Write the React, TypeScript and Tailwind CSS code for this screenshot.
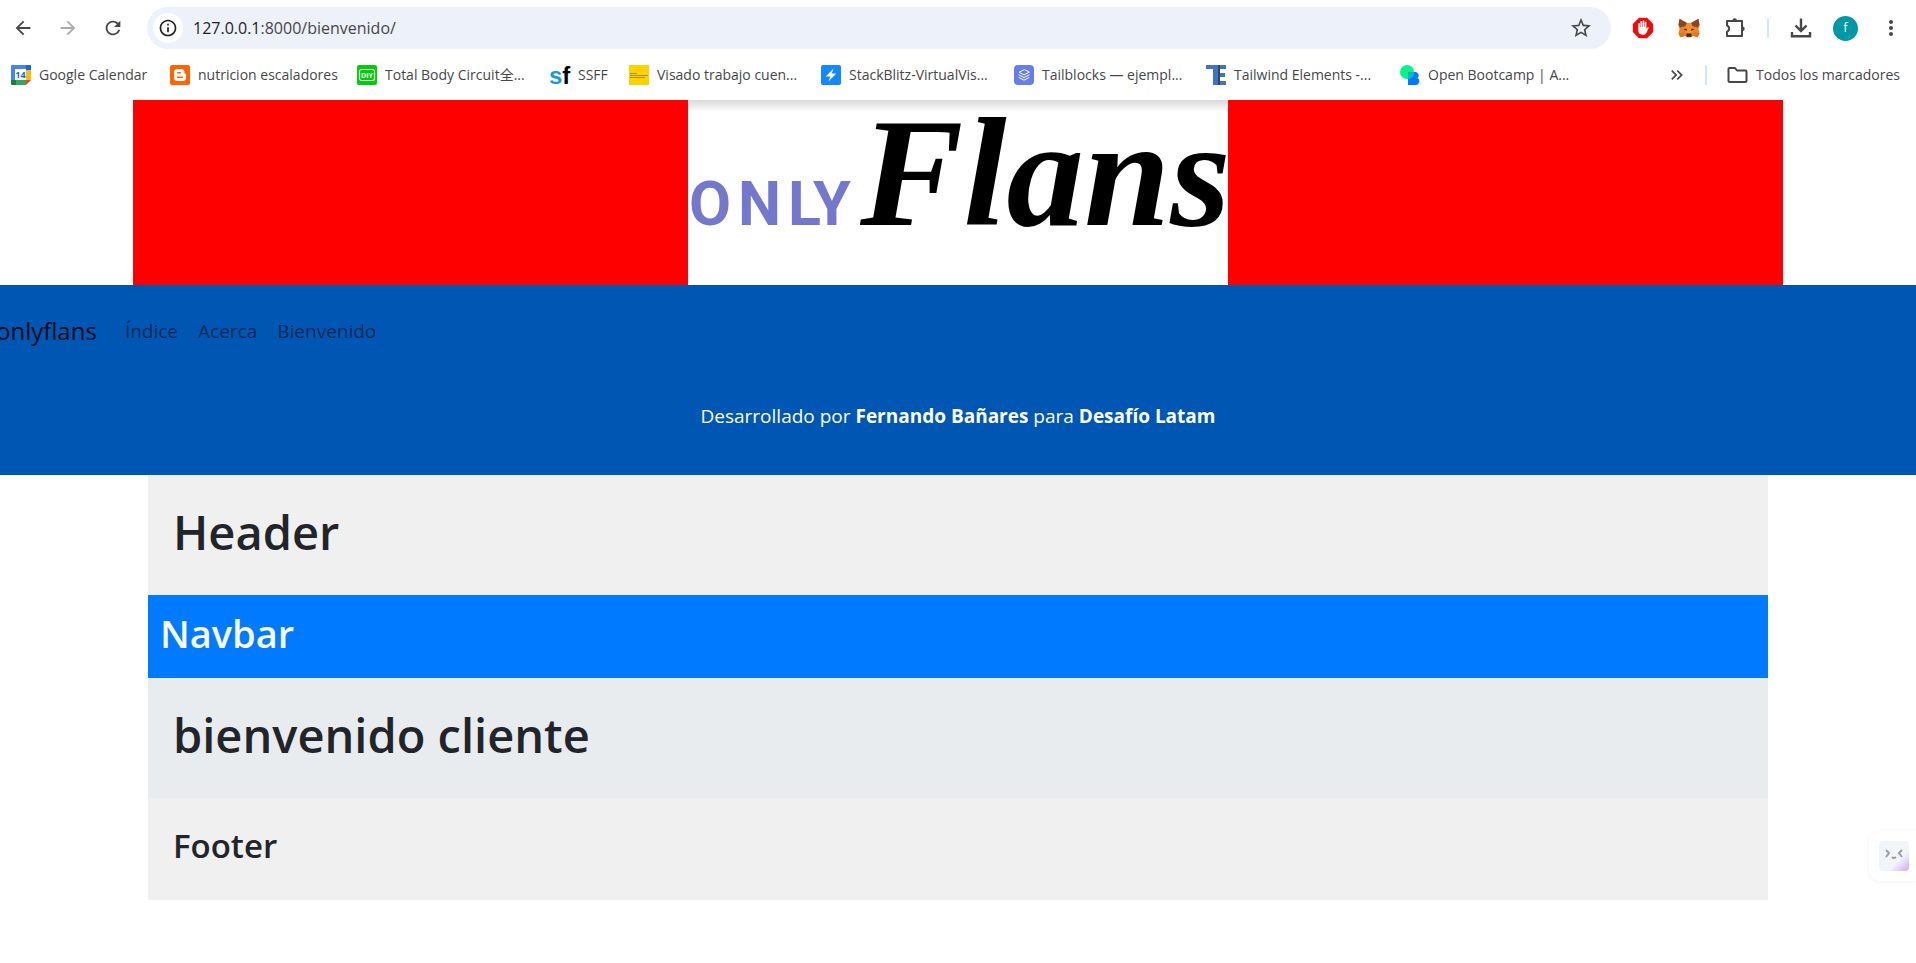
import type { ReactNode } from "react";
import {
  MdArrowBack,
  MdArrowForward,
  MdRefresh,
  MdInfoOutline,
  MdStarBorder,
  MdMoreVert,
  MdKeyboardDoubleArrowRight,
} from "react-icons/md";

function CalendarIcon() {
  return (
    <svg viewBox="0 0 20 20" className="size-5 shrink-0" aria-hidden="true">
      <path d="M1 0h14v4H4v12H0V1a1 1 0 0 1 1-1z" fill="#4285f4" />
      <path d="M15 0h4a1 1 0 0 1 1 1v4h-5z" fill="#1967d2" />
      <path d="M15 5h5v10h-5z" fill="#fbbc04" />
      <path d="M5 15h10v5H5z" fill="#34a853" />
      <path d="M0 15h5v5H1a1 1 0 0 1-1-1z" fill="#188038" />
      <path d="M15 15h5l-5 5z" fill="#ea4335" />
      <path d="M4 4h11v11H4z" fill="#fff" />
      <text x="9.5" y="13" textAnchor="middle" fontSize="9" fontWeight="700" fontFamily="Open Sans, sans-serif" fill="#1967d2">
        14
      </text>
    </svg>
  );
}

function BloggerIcon() {
  return (
    <svg viewBox="0 0 20 20" className="size-5 shrink-0" aria-hidden="true">
      <rect width="20" height="20" rx="2" fill="#ff6600" />
      <path
        d="M7.5 4h3.6a3.4 3.4 0 0 1 3.4 3.4c0 1 .3 1.3 1 1.4.4 0 .6.3.6.7v3.1A3.4 3.4 0 0 1 12.7 16H7.5A3.5 3.5 0 0 1 4 12.5v-5A3.5 3.5 0 0 1 7.5 4z"
        fill="#fff"
      />
      <path d="M7.6 7.7h2.8M7.6 12.2h4.8" stroke="#ff6600" strokeWidth="1.6" strokeLinecap="round" />
    </svg>
  );
}

function DiyIcon() {
  return (
    <svg viewBox="0 0 20 20" className="size-5 shrink-0" aria-hidden="true">
      <rect width="20" height="20" rx="2" fill="#05cb0c" />
      <rect x="2.5" y="4.5" width="15" height="11" rx="2" fill="none" stroke="#d9fbd9" strokeWidth="1.2" />
      <text x="10" y="12.7" textAnchor="middle" fontSize="7" fontWeight="700" fontFamily="Open Sans, sans-serif" fill="#fff">
        DIY
      </text>
    </svg>
  );
}

function SfIcon() {
  return (
    <svg viewBox="0 0 20 20" className="size-5 shrink-0 overflow-visible" aria-hidden="true">
      <text x="-1" y="19" fontSize="24" fontWeight="700" fontFamily="Liberation Sans, sans-serif" fill="#1b9ad6">
        s<tspan fill="#000">f</tspan>
      </text>
    </svg>
  );
}

function YellowIcon() {
  return (
    <svg viewBox="0 0 20 20" className="size-5 shrink-0" aria-hidden="true">
      <rect width="20" height="20" fill="#ffd100" />
      <path d="M1 8.5h7M1 10.500h18M1 12.500h15" stroke="#a8901a" strokeWidth="1" />
    </svg>
  );
}

function BoltIcon() {
  return (
    <svg viewBox="0 0 20 20" className="size-5 shrink-0" aria-hidden="true">
      <rect width="20" height="20" rx="2" fill="#1389fd" />
      <path d="M12.5 3.5 4.8 11.5h4.5L7.5 16.5l7.7-8h-4.5z" fill="#fff" />
    </svg>
  );
}

function LayersIcon() {
  return (
    <svg viewBox="0 0 20 20" className="size-5 shrink-0" aria-hidden="true">
      <rect width="20" height="20" rx="4" fill="#667eea" />
      <path
        d="M10 4.8 5 7.3l5 2.5 5-2.5zM5 12.6l5 2.5 5-2.5M5 10l5 2.5 5-2.5"
        fill="none"
        stroke="#fff"
        strokeLinejoin="round"
        strokeLinecap="round"
      />
    </svg>
  );
}

function BlocksIcon() {
  return (
    <svg viewBox="0 0 20 20" className="size-5 shrink-0" aria-hidden="true">
      <path d="M0 0h20v4H0zM7 4h5v12H7zM12 8h7v4h-7zM7 16h13v4H7z" fill="#4273bd" />
      <path d="M12 0h2v20h-2z" fill="#2b4675" />
    </svg>
  );
}

function BootcampIcon() {
  return (
    <svg viewBox="0 0 20 20" className="size-5 shrink-0" aria-hidden="true">
      <path d="M8 7h8a3.5 3.5 0 0 1 1.5 6A3.8 3.8 0 0 1 15 20H8z" fill="#007bff" />
      <circle cx="7" cy="7" r="7" fill="#0cf287" />
      <path d="M8 7h6a7 7 0 0 1-6 6.900z" fill="#05b8c2" />
    </svg>
  );
}

function StopHandIcon() {
  return (
    <svg viewBox="0 0 22 22" className="size-[22px]" aria-hidden="true">
      <path d="M7 .8h8L21.2 7v8L15 21.2H7L.8 15V7z" fill="#ed0c0c" />
      <path
        d="M6.3 12V6.8a.8.8 0 0 1 1.6 0V10h.5V4.900a.85.85 0 0 1 1.700 0V10h.5V4.200a.85.85 0 0 1 1.700 0V10h.5V5.400a.8.8 0 0 1 1.600 0v6.200l1-1.200c.6-.6 1.500 0 1.200.7l-2 4.400c-.8 1.600-1.900 2.300-3.600 2.300-2.700 0-4.700-1.500-4.700-4z"
        fill="#fff"
      />
    </svg>
  );
}

function FoxIcon() {
  return (
    <svg viewBox="0 0 22 20" className="h-5 w-[22px]" aria-hidden="true">
      <path d="M1.5.8 9 5h4L20.5.8 21.5 7l-1 4 1 4-1.700 4.200-4.600-1.100L13 19.500H9l-2.200-1.400-4.600 1.100L.5 15l1-4-1-4z" fill="#f28321" />
      <path d="M1.5.8 9 5 7.5 8 2.200 9.500.5 7zM20.500.8 13 5l1.500 3 5.300 1.500L21.500 7z" fill="#8a4526" />
      <path d="M9 5h4l2 7-1.500 3h-5L7 12z" fill="#f6932b" />
      <path d="M.5 15l6.300-.5v3.600l-4.600 1.100zM21.500 15l-6.300-.5v3.600l4.600 1.100z" fill="#e8751a" />
      <path d="M5.500 11.300 8.400 10.600l.6 2.300zM16.500 11.300l-2.900-.7-.6 2.300z" fill="#233447" />
      <path d="M8.600 15.500h4.800l.3 2.500-.7.700H9l-.7-.7z" fill="#302a2a" />
    </svg>
  );
}

function PuzzleIcon() {
  return (
    <svg viewBox="0 0 22 22" className="size-[22px]" aria-hidden="true">
      <path
        d="M3 4h15v15H3v-4.300a3.300 3.300 0 0 0 0-6.200z"
        fill="none"
        stroke="currentColor"
        strokeWidth="2"
        strokeLinejoin="round"
      />
      <path d="M8.500 3.500a2.200 2.200 0 0 1 4.400 0zM18.500 9.500a2.200 2.200 0 0 1 0 4.400z" fill="currentColor" />
    </svg>
  );
}

function DownloadIcon() {
  return (
    <svg viewBox="0 0 22 22" className="size-[22px]" fill="none" stroke="currentColor" strokeWidth="2.4" aria-hidden="true">
      <path d="M11 1.500v12M5.500 8.500 11 14l5.500-5.500M2 15v4.300h18V15" />
    </svg>
  );
}

function FolderIcon() {
  return (
    <svg viewBox="0 0 21 18" className="h-[18px] w-[21px]" fill="none" stroke="currentColor" strokeWidth="2" strokeLinejoin="round" aria-hidden="true">
      <path d="M2.500 2H8l2 2.500h8.500a1 1 0 0 1 1 1V15a1 1 0 0 1-1 1h-16a1 1 0 0 1-1-1V3a1 1 0 0 1 1-1z" />
    </svg>
  );
}

function Bookmark({ icon, children }: { icon: ReactNode; children: ReactNode }) {
  return (
    <a href="#" className="flex items-center gap-2 whitespace-nowrap">
      {icon}
      <span>{children}</span>
    </a>
  );
}

function BrowserBar() {
  return (
    <div className="bg-white text-[#474747]">
      <div className="flex items-center pt-[7px] pr-[13px]">
        <div className="flex flex-1 items-center gap-[23px] pl-3">
          <div className="flex items-center gap-[23px]">
            <button type="button" aria-label="Atrás" className="text-[#474747]">
              <MdArrowBack className="size-[22px]" />
            </button>
            <button type="button" aria-label="Adelante" className="text-[#ababab]">
              <MdArrowForward className="size-[22px]" />
            </button>
            <button type="button" aria-label="Recargar" className="text-[#474747]">
              <MdRefresh className="size-[22px]" />
            </button>
          </div>
          <div className="flex h-[42px] flex-1 items-center rounded-full bg-[#ecf1fa] pr-[18px] pl-[6px]">
            <button
              type="button"
              aria-label="Información del sitio"
              className="flex size-[30px] items-center justify-center rounded-full bg-white text-[#1f1f1f]"
            >
              <MdInfoOutline className="size-5" />
            </button>
            <div className="ml-[10px] flex-1 text-base text-[#474747]">
              <span className="text-[#1f1f1f]">127.0.0.1</span>:8000/bienvenido/
            </div>
            <button type="button" aria-label="Añadir a marcadores">
              <MdStarBorder className="size-6" />
            </button>
          </div>
        </div>
        <div className="ml-[21px] flex items-center gap-6">
          <button type="button" aria-label="Bloqueador">
            <StopHandIcon />
          </button>
          <button type="button" aria-label="Cartera">
            <FoxIcon />
          </button>
          <button type="button" aria-label="Extensiones">
            <PuzzleIcon />
          </button>
        </div>
        <span className="mx-[21px] h-5 w-[2px] rounded bg-[#d3e3fd]" />
        <div className="flex items-center gap-[21px]">
          <button type="button" aria-label="Descargas">
            <DownloadIcon />
          </button>
          <button
            type="button"
            aria-label="Perfil"
            className="flex size-[25px] items-center justify-center rounded-full bg-[#0097a7] text-[13px] text-white"
          >
            f
          </button>
          <button type="button" aria-label="Menú">
            <MdMoreVert className="size-6" />
          </button>
        </div>
      </div>
      <div className="flex h-[51px] items-center pr-4 pl-[11px] text-sm">
        <nav
          aria-label="Marcadores"
          className="grid flex-1 grid-cols-[139px_167px_173px_59px_172px_173px_172px_174px_166px] gap-5"
        >
          <Bookmark icon={<CalendarIcon />}>Google Calendar</Bookmark>
          <Bookmark icon={<BloggerIcon />}>nutricion escaladores</Bookmark>
          <Bookmark icon={<DiyIcon />}>Total Body Circuit全...</Bookmark>
          <Bookmark icon={<SfIcon />}>SSFF</Bookmark>
          <Bookmark icon={<YellowIcon />}>Visado trabajo cuen...</Bookmark>
          <Bookmark icon={<BoltIcon />}>StackBlitz-VirtualVis...</Bookmark>
          <Bookmark icon={<LayersIcon />}>Tailblocks — ejempl...</Bookmark>
          <Bookmark icon={<BlocksIcon />}>Tailwind Elements -...</Bookmark>
          <Bookmark icon={<BootcampIcon />}>Open Bootcamp | A...</Bookmark>
        </nav>
        <button type="button" aria-label="Más marcadores">
          <MdKeyboardDoubleArrowRight className="size-5" />
        </button>
        <span className="mr-5 ml-[18px] h-5 w-[2px] rounded bg-[#d3e3fd]" />
        <a href="#" className="flex items-center gap-2 whitespace-nowrap">
          <FolderIcon />
          Todos los marcadores
        </a>
      </div>
    </div>
  );
}

function Logo() {
  return (
    <div className="relative h-[185px] w-[540px] bg-white">
      <svg viewBox="0 0 540 185" className="h-full w-full" role="img" aria-label="Only Flans">
        <text y="125" fontFamily="Roboto, sans-serif" fontSize="61" fontWeight="700" fill="#7378cc">
          <tspan x="1">O</tspan>
          <tspan x="50">N</tspan>
          <tspan x="100">L</tspan>
          <tspan x="125">Y</tspan>
        </text>
        <text x="172" y="125" fontFamily="Liberation Serif, serif" fontSize="155" fontWeight="700" fontStyle="italic" fill="#000">
          Flans
        </text>
      </svg>
      <div className="absolute inset-x-0 top-0 h-3 bg-linear-to-b from-black/15 to-transparent" />
    </div>
  );
}

export default function App() {
  return (
    <div className="min-h-screen overflow-x-hidden bg-white font-['Open_Sans','Noto_Sans_CJK_SC',sans-serif] text-[#212529]">
      <BrowserBar />
      <div className="mx-auto flex max-w-[1650px] justify-center bg-[#ff0000]">
        <Logo />
      </div>
      <div className="bg-[#0056b3] pt-5 pb-11">
        <nav aria-label="Principal" className="flex h-[52px] items-center">
          <a href="#" className="-ml-1 text-2xl text-black/90">
            onlyflans
          </a>
          <ul className="ml-7 flex gap-5 text-[19px] text-black/55">
            <li>
              <a href="#">Índice</a>
            </li>
            <li>
              <a href="#">Acerca</a>
            </li>
            <li>
              <a href="#">Bienvenido</a>
            </li>
          </ul>
        </nav>
        <p className="mt-11 text-center text-[19px] leading-[30px] text-white">
          Desarrollado por <strong className="font-bold">Fernando Bañares</strong> para{" "}
          <strong className="font-bold">Desafío Latam</strong>
        </p>
      </div>
      <main className="mx-auto max-w-[1620px]">
        <header className="bg-[#f0f0f0] px-[25px] pt-[27px] pb-[33px]">
          <h1 className="text-[47px] leading-[60px] font-semibold">Header</h1>
        </header>
        <section className="bg-[#007bff] px-3 pt-[14px] pb-[21px]">
          <h2 className="text-[38px] leading-[48px] font-semibold text-[#f8f9fa]">Navbar</h2>
        </section>
        <section className="bg-[#e9ecef] px-[25px] pt-[27px] pb-[33px]">
          <h1 className="text-[47px] leading-[60px] font-semibold">bienvenido cliente</h1>
        </section>
        <footer className="bg-[#f0f0f0] px-[25px] pt-[27px] pb-[33px]">
          <h3 className="text-[33px] leading-[42px] font-semibold">Footer</h3>
        </footer>
      </main>
      <button
        type="button"
        aria-label="Asistente"
        className="fixed right-0 bottom-[82px] rounded-l-xl bg-white py-[10px] pr-[7px] pl-[10px] shadow-[0_1px_5px_rgba(0,0,0,0.06)]"
      >
        <span className="flex size-[30px] items-center justify-center rounded bg-linear-to-br from-[#f1f5f9] from-65% to-[#cfa8ee]">
          <svg viewBox="0 0 20 12" className="mb-1 h-3 w-5" fill="none" stroke="#9a9ea6" strokeWidth="2" aria-hidden="true">
            <path d="M2 2l3 3-3 4M18 2l-3 3 3 4M8 9q2 2 4 0" />
          </svg>
        </span>
      </button>
    </div>
  );
}
